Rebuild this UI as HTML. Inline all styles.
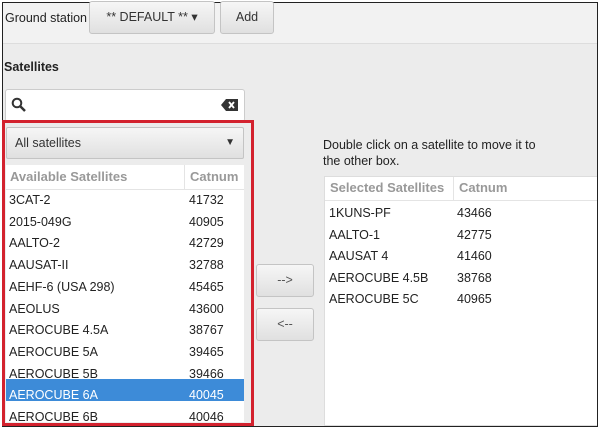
<!DOCTYPE html>
<html><head><style>
*{box-sizing:border-box;margin:0;padding:0}
body{width:600px;height:431px;background:#fff;font-family:"Liberation Sans",sans-serif;font-size:12.5px;color:#222;position:relative;overflow:hidden}
.frame{position:absolute;left:2px;top:2px;width:596px;height:425px;border:1px solid #222;background:#ececec}
.a{position:absolute}
.btn{position:absolute;border:1px solid #c4c4c4;border-radius:3px;background:linear-gradient(#f6f6f6,#e0e0e0);text-align:center;color:#333}
.row{position:absolute;height:22px;line-height:22px;font-size:12.5px}
.hd{color:#999;font-weight:bold;font-size:13px}
</style></head><body>
<div class="frame"></div>
<div class="a" style="left:3px;top:3px;width:594px;height:41px;background:#f2f2f2;border-bottom:1px solid #ddd"></div>
<div class="a" style="left:5px;top:11px">Ground station</div>
<div class="btn" style="left:89px;top:1px;width:126px;height:33px;line-height:31px">** DEFAULT ** &#9662;</div>
<div class="btn" style="left:220px;top:1px;width:54px;height:33px;line-height:31px">Add</div>
<div class="a" style="left:4px;top:60px;font-weight:bold">Satellites</div>
<div class="a" style="left:5px;top:89px;width:240px;height:33px;background:#fff;border:1px solid #ccc;border-radius:3px"></div>
<svg class="a" style="left:11px;top:97px" width="16" height="16"><circle cx="6" cy="6" r="4.3" fill="none" stroke="#333" stroke-width="2"/><line x1="9" y1="9" x2="14" y2="14" stroke="#333" stroke-width="2.5"/></svg>
<svg class="a" style="left:221px;top:99px" width="17" height="12"><path d="M0 6L5 0H17V12H5Z" fill="#333"/><path d="M8 3L13 9M13 3L8 9" stroke="#fff" stroke-width="1.8"/></svg>
<div class="a" style="left:2px;top:120px;width:252px;height:306px;border:3px solid #d3222e"></div>
<div class="btn" style="left:6px;top:127px;width:238px;height:32px;line-height:30px;text-align:left;padding-left:8px;border-radius:2px">All satellites<span style="position:absolute;right:8px;font-size:10px">&#9660;</span></div>
<div class="a" style="left:6px;top:165px;width:238px;height:257px;background:#fff"></div>
<div class="a" style="left:6px;top:189px;width:238px;height:1px;background:#e4e4e4"></div>
<div class="a" style="left:184px;top:165px;width:1px;height:24px;background:#e4e4e4"></div>
<div class="row hd" style="left:10px;top:166px">Available Satellites</div>
<div class="row hd" style="left:190px;top:166px">Catnum</div>
<div class="a" style="left:6px;top:379px;width:238px;height:22px;background:#3d8bd8"></div>
<div id="L"></div>
<div class="btn" style="left:256px;top:264px;width:58px;height:33px;line-height:31px;color:#555">--&gt;</div>
<div class="btn" style="left:256px;top:308px;width:58px;height:33px;line-height:31px;color:#555">&lt;--</div>
<div class="a" style="left:323px;top:137px;line-height:16px">Double click on a satellite to move it to<br>the other box.</div>
<div class="a" style="left:324px;top:176px;width:273px;height:250px;background:#fff;border:1px solid #ddd;border-right:none"></div>
<div class="a" style="left:325px;top:200px;width:272px;height:1px;background:#e4e4e4"></div>
<div class="a" style="left:453px;top:177px;width:1px;height:23px;background:#e4e4e4"></div>
<div class="row hd" style="left:330px;top:177px">Selected Satellites</div>
<div class="row hd" style="left:459px;top:177px">Catnum</div>
<div id="R"></div>
<script>
var l=[["3CAT-2",41732],["2015-049G",40905],["AALTO-2",42729],["AAUSAT-II",32788],["AEHF-6 (USA 298)",45465],["AEOLUS",43600],["AEROCUBE 4.5A",38767],["AEROCUBE 5A",39465],["AEROCUBE 5B",39466],["AEROCUBE 6A",40045],["AEROCUBE 6B",40046]];
var h="";l.forEach(function(r,i){var y=189+i*21.7,c=i==9?"color:#fff;":"";h+='<div class="row" style="'+c+'left:9px;top:'+y+'px">'+r[0]+'</div><div class="row" style="'+c+'left:189px;top:'+y+'px">'+r[1]+'</div>';});
document.getElementById("L").outerHTML=h;
var r=[["1KUNS-PF",43466],["AALTO-1",42775],["AAUSAT 4",41460],["AEROCUBE 4.5B",38768],["AEROCUBE 5C",40965]];
h="";r.forEach(function(x,i){var y=202+i*21.5;h+='<div class="row" style="left:329px;top:'+y+'px">'+x[0]+'</div><div class="row" style="left:457px;top:'+y+'px">'+x[1]+'</div>';});
document.getElementById("R").outerHTML=h;
</script>
</body></html>
